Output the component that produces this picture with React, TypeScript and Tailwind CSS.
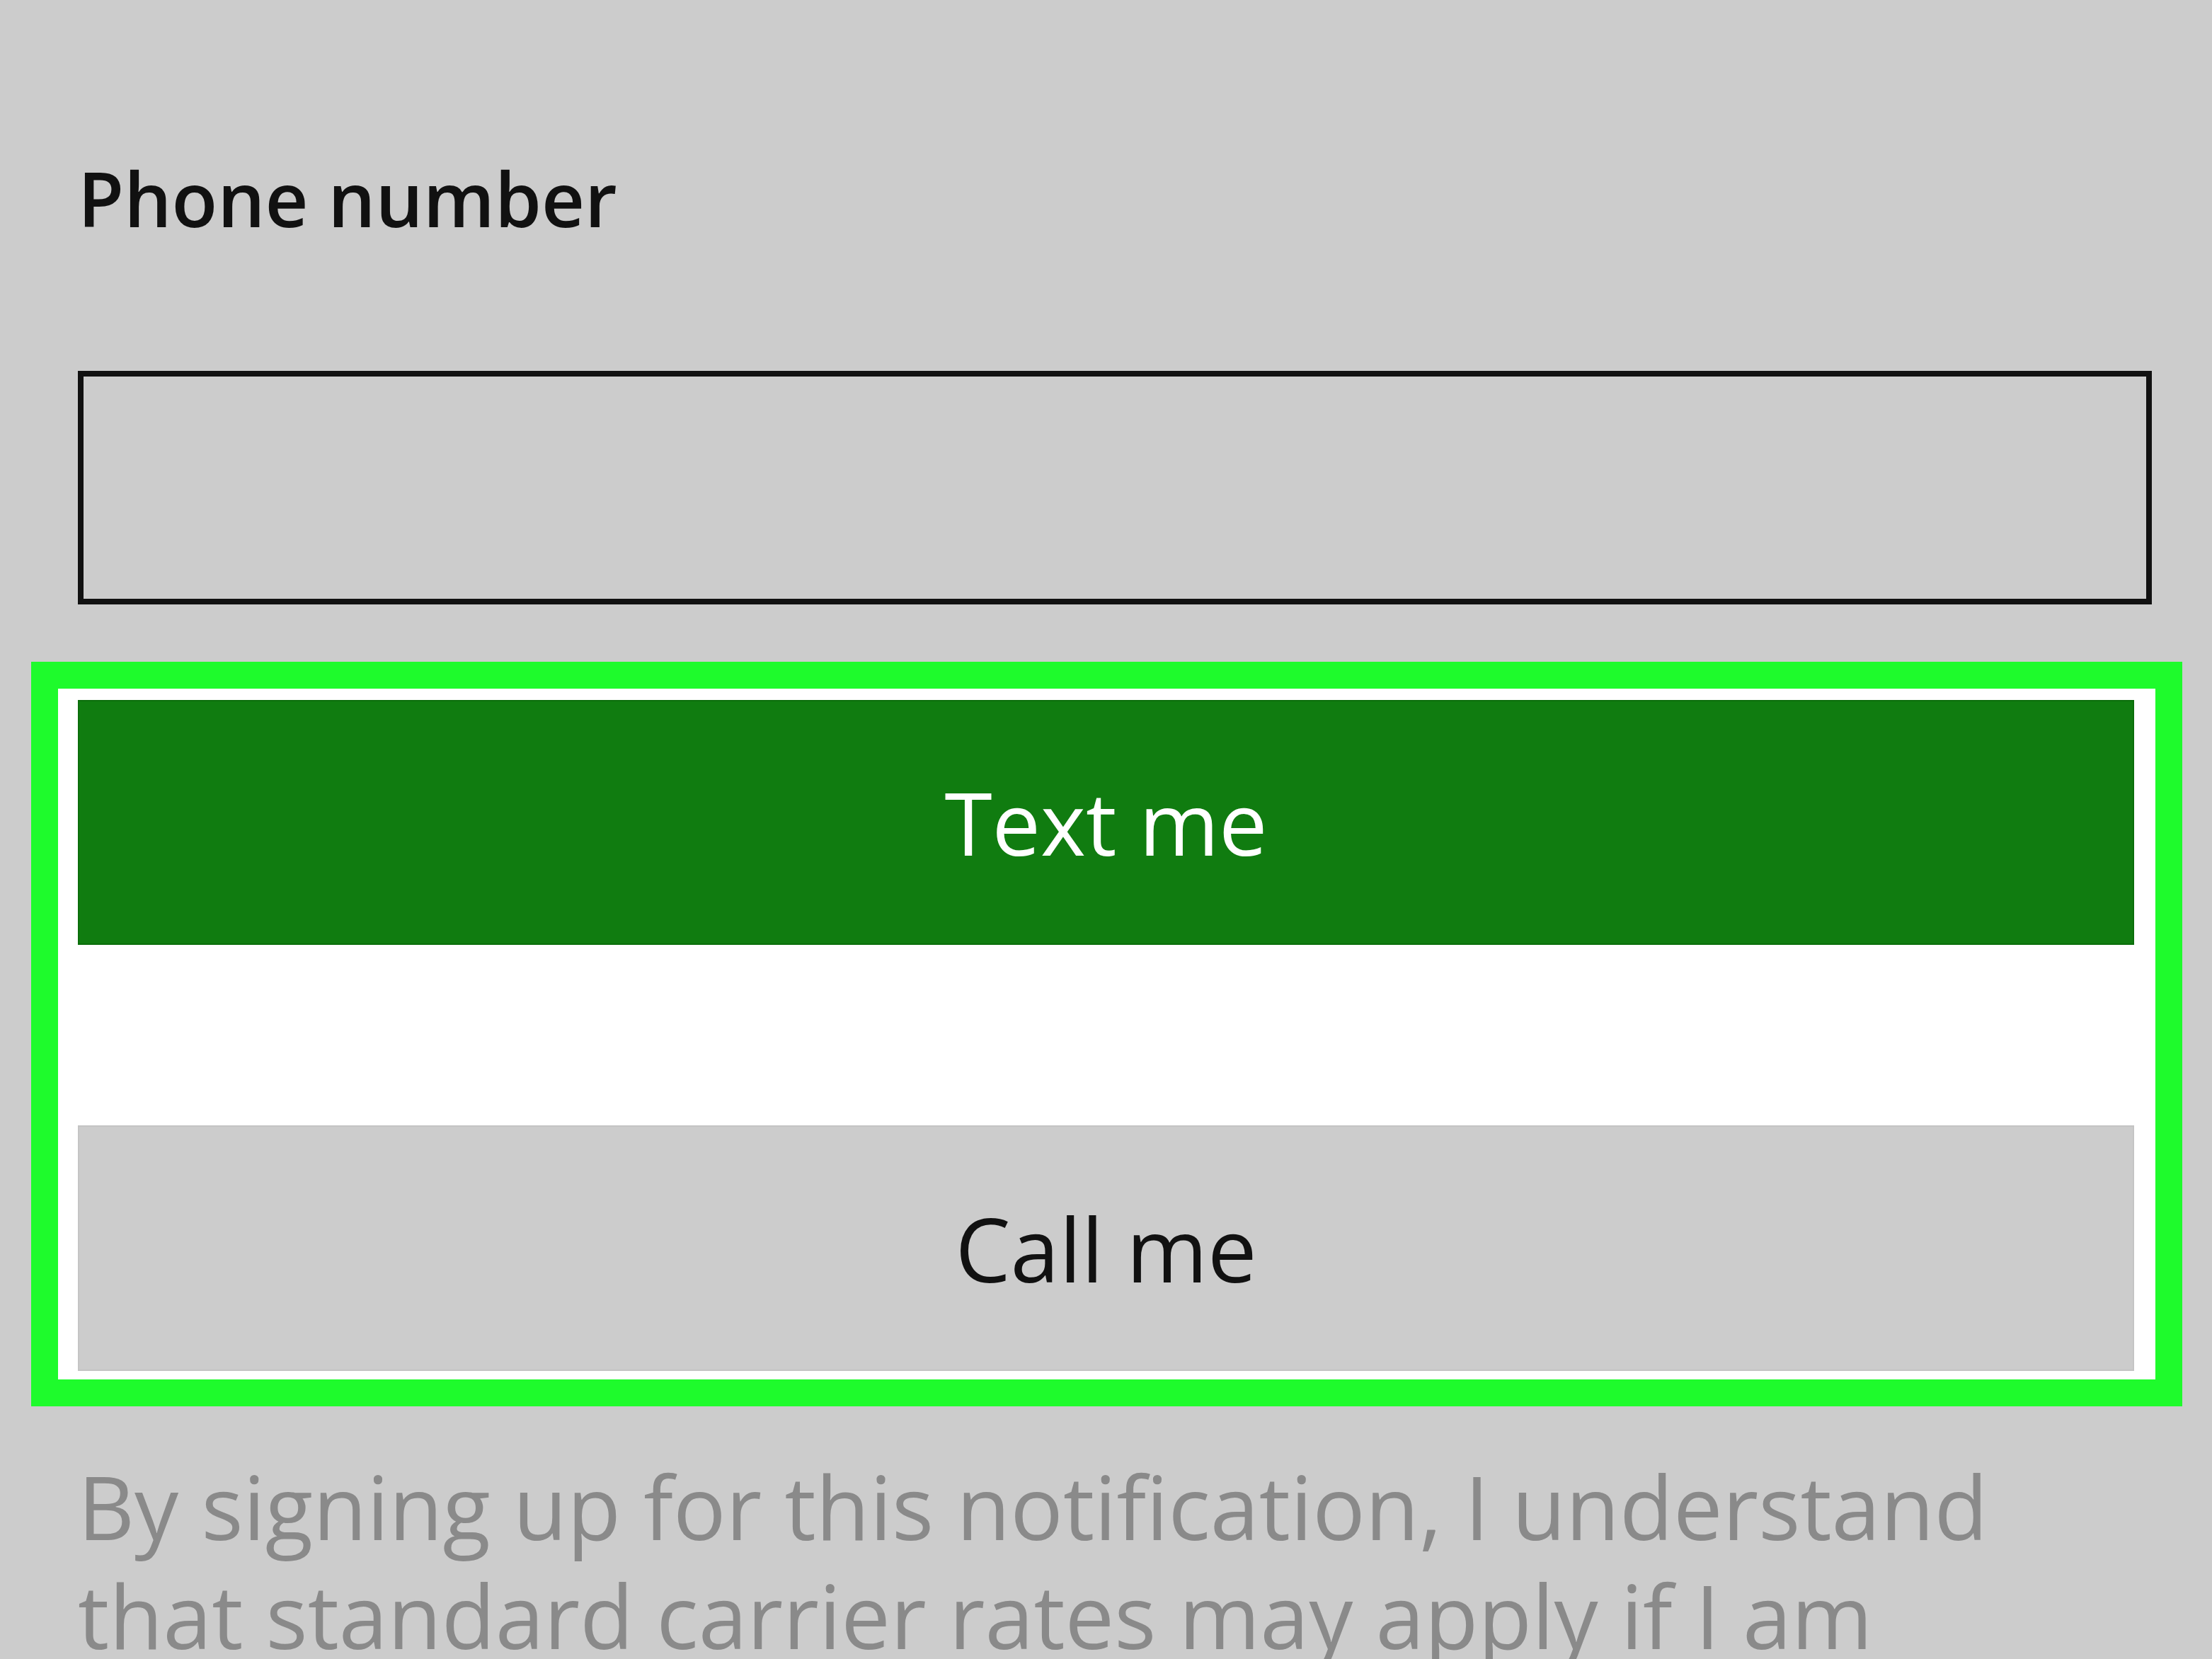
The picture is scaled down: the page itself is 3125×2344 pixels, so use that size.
export default function App() {
  return (
    <div className="h-[2344px] w-[3125px] overflow-hidden bg-[#cccccc] font-['Open_Sans',sans-serif]">
      <div className="pl-[110px] pt-[210px]">
        <label className="block text-[106px] leading-[140px] font-semibold text-[#111111]">Phone number</label>
      </div>
      <div className="mt-[174px] ml-[110px] h-[330px] w-[2930px] border-[8px] border-[#111111]" />
      <div className="mt-[81px] ml-[44px] w-[3039px] h-[1052px] border-[38px] border-[#1efb2c] bg-white pt-[16px] pl-[28px] pr-[30px] pb-[12px] flex flex-col">
        <button className="h-[346px] w-full bg-[#107c10] border-[2px] border-[#0b6e0b] text-white text-[122px] leading-none">Text me</button>
        <button className="mt-[255px] h-[347px] w-full bg-[#cccccc] border-[2px] border-[#c4c4c4] text-[#111111] text-[124px] leading-none">Call me</button>
      </div>
      <p className="mt-[64px] pl-[110px] pr-[200px] text-[124px] leading-[154px] text-[#8a8a8a]">
        By signing up for this notification, I understand that standard carrier rates may apply if I am
      </p>
    </div>
  );
}
